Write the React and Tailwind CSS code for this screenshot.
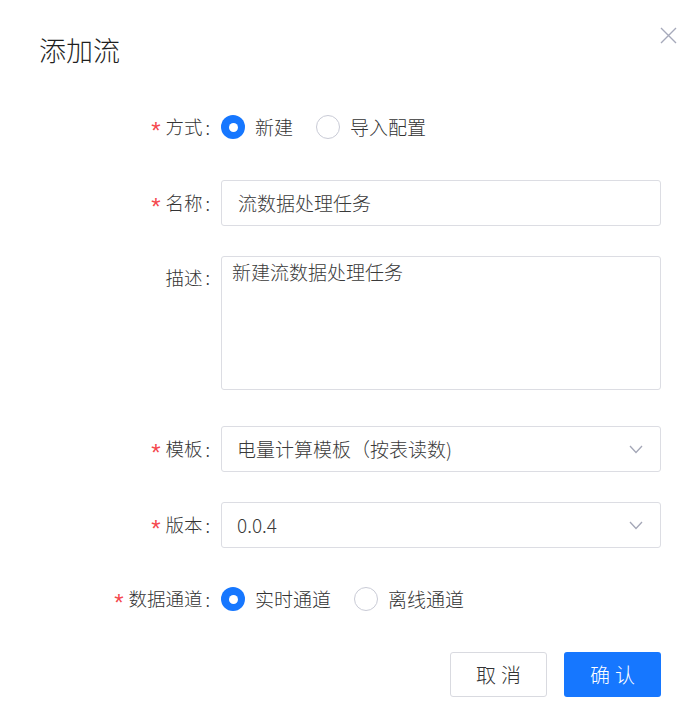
import React from 'react';

const font = { fontFamily: '"Noto Sans CJK SC", "Noto Sans", sans-serif' };

const Label = ({ required, children, top }) => (
  <div className={`w-[211px] shrink-0 flex justify-end text-[18px] text-[#333] ${top ? 'items-start pt-[8px]' : 'items-center'}`}>
    {required && (
      <span className="text-[#f5484d] mr-[5px] text-[24px] leading-none translate-y-[4px]" style={{ fontFamily: '"Liberation Sans", sans-serif' }}>*</span>
    )}
    <span className="text-[18.5px]">{children}</span>
    <span className="ml-[3px] mr-[1px]">:</span>
  </div>
);

const Radio = ({ checked, label }) => (
  <label className="flex items-center mr-[23px] text-[19px] text-[#333]">
    {checked ? (
      <span className="w-[24px] h-[24px] rounded-full bg-[#1677ff] flex items-center justify-center">
        <span className="w-[9px] h-[9px] rounded-full bg-white"></span>
      </span>
    ) : (
      <span className="w-[24px] h-[24px] rounded-full border border-[#c9cbd6] bg-white"></span>
    )}
    <span className="ml-[10px]">{label}</span>
  </label>
);

const Chevron = () => (
  <svg width="14" height="9" viewBox="0 0 14 9" fill="none" className="shrink-0">
    <path d="M1 1 L7 7.5 L13 1" stroke="#a4a7b7" strokeWidth="1.3" />
  </svg>
);

const Row = ({ children, className = '' }) => (
  <div className={`flex ${className}`}>{children}</div>
);

const App = () => {
  return (
    <div className="w-[697px] h-[726px] bg-white relative font-light" style={font}>
      <button className="absolute left-[660px] top-[27px]">
        <svg width="17" height="17" viewBox="0 0 17 17">
          <path d="M1 1 L16 16 M16 1 L1 16" stroke="#a6a9ba" strokeWidth="1.4" />
        </svg>
      </button>

      <div className="pt-[32px] pl-[39px]">
        <h2 className="text-[27px] leading-[36px] text-[#1f1f1f]">添加流</h2>
      </div>

      <div className="mt-[36px] w-[661px] flex flex-col">
        <Row className="h-[46px]">
          <Label required>方式</Label>
          <div className="flex items-center pl-[10px]">
            <Radio checked label="新建" />
            <Radio label="导入配置" />
          </div>
        </Row>

        <Row className="h-[46px] mt-[30px]">
          <Label required>名称</Label>
          <div className="flex-1 ml-[10px] border border-[#dcdde3] rounded-[3px] flex items-center pl-[16px] text-[19px] text-[#3a3a3a]">
            流数据处理任务
          </div>
        </Row>

        <Row className="h-[134px] mt-[30px]">
          <Label top>描述</Label>
          <div className="flex-1 ml-[10px] border border-[#dcdde3] rounded-[3px] pl-[10px] pt-[1px] text-[19px] leading-[28px] text-[#3a3a3a]">
            新建流数据处理任务
          </div>
        </Row>

        <Row className="h-[46px] mt-[36px]">
          <Label required>模板</Label>
          <div className="flex-1 ml-[10px] border border-[#dcdde3] rounded-[3px] flex items-center justify-between pl-[15px] pr-[17px] text-[19px] text-[#3a3a3a]">
            <span>电量计算模板（按表读数)</span>
            <Chevron />
          </div>
        </Row>

        <Row className="h-[46px] mt-[30px]">
          <Label required>版本</Label>
          <div className="flex-1 ml-[10px] border border-[#dcdde3] rounded-[3px] flex items-center justify-between pl-[15px] pr-[17px] text-[19px] text-[#3a3a3a]">
            <span>0.0.4</span>
            <Chevron />
          </div>
        </Row>

        <Row className="h-[46px] mt-[28px]">
          <Label required>数据通道</Label>
          <div className="flex items-center pl-[10px]">
            <Radio checked label="实时通道" />
            <Radio label="离线通道" />
          </div>
        </Row>

        <div className="flex justify-end gap-[17px] mt-[30px]">
          <button className="w-[97px] h-[45px] border border-[#d9dae0] rounded-[3px] bg-white text-[20px] text-[#333] tracking-[5px] pl-[5px]">
            取消
          </button>
          <button className="w-[97px] h-[45px] rounded-[3px] bg-[#1677ff] text-[20px] text-white tracking-[5px] pl-[5px]">
            确认
          </button>
        </div>
      </div>
    </div>
  );
};

export default App;
